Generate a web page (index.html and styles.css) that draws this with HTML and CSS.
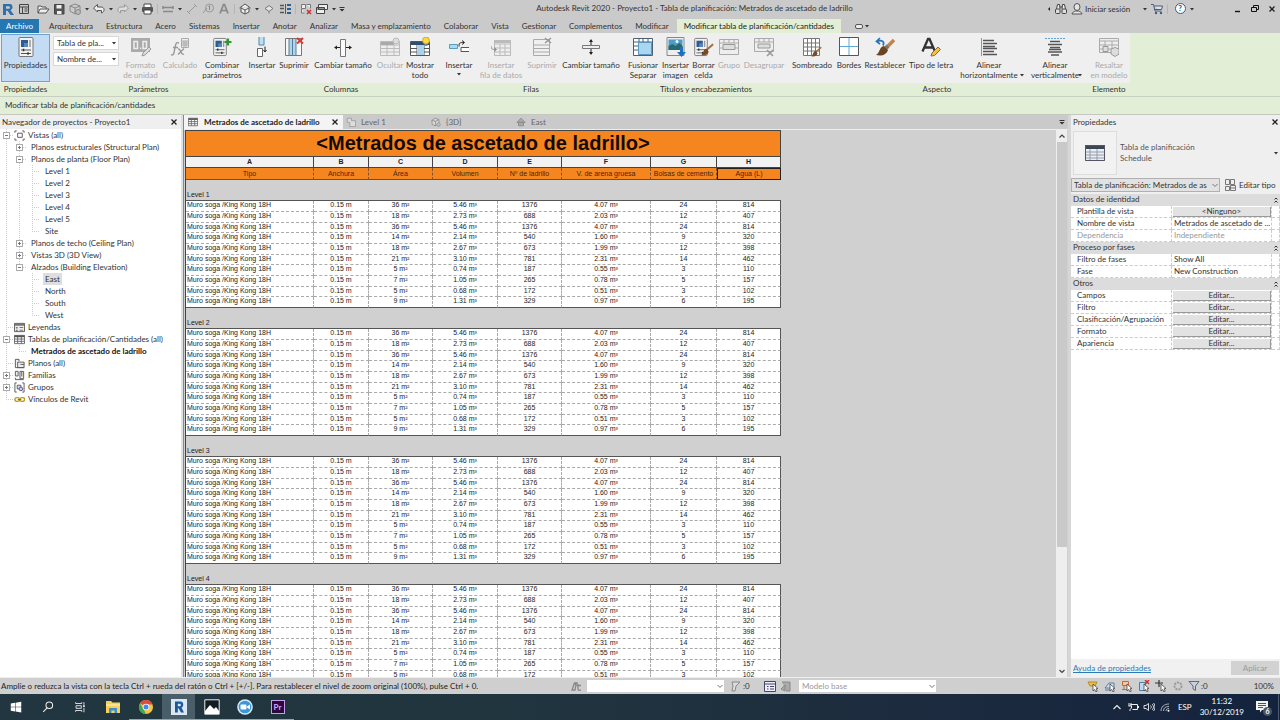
FILE: index.html
```html
<!DOCTYPE html>
<html lang="es">
<head>
<meta charset="utf-8">
<title>Autodesk Revit 2020 - Proyecto1</title>
<link rel="stylesheet" href="styles.css">
</head>
<body>
<svg class="defs" aria-hidden="true">
  <symbol id="revit" viewBox="0 0 16 16"><path d="M3 3h7c3 0 3.500 5 .5 6.200L14 14h-3.500L7.500 9.800H6V14H3zM6 5.200v2.600h3c1.300 0 1.300-2.600 0-2.600z" fill="#2f6fae" fill-rule="evenodd"/></symbol>
  <symbol id="home" viewBox="0 0 16 16"><path d="M3.500 3.500h9v9h-9zM3.500 6h9M6.500 6v6.500M8.500 8h3M8.500 10h3" fill="none" stroke="#444"/></symbol>
  <symbol id="open" viewBox="0 0 16 16"><path d="M3 12V5h3l1 1h4v2M3 12l2-4h9l-3 4z" fill="#eee" stroke="#555"/></symbol>
  <symbol id="save" viewBox="0 0 16 16"><path d="M3.500 3.500h9.500v9.500h-9.500z" fill="#555" stroke="#444"/><path d="M5.500 4h5v3.500h-5zM6 10h4.500v3H6z" fill="#eee"/></symbol>
  <symbol id="sync" viewBox="0 0 16 16"><path d="M3 5l5-2 5 2v5l-5 3-5-3zM3 5l5 2 5-2M8 7v6" fill="#ccc" stroke="#888"/><circle cx="11" cy="11" r="2.500" fill="#bbb" stroke="#888"/></symbol>
  <symbol id="undo" viewBox="0 0 16 16"><path d="M2.500 7l4-3.500V6H10c4 0 4 5 .5 6V9.500H6.500V11z" fill="#eee" stroke="#555"/></symbol>
  <symbol id="redo" viewBox="0 0 16 16"><path d="M13.500 7l-4-3.500V6H6c-4 0-4 5-.5 6V9.500h4V11z" fill="#ddd" stroke="#999"/></symbol>
  <symbol id="print" viewBox="0 0 16 16"><path d="M5 6V3h7v3" fill="#fff" stroke="#444"/><rect x="3" y="6" width="11" height="5" rx="1" fill="#555"/><path d="M5 9h7v4H5z" fill="#fff" stroke="#444"/></symbol>
  <symbol id="measure" viewBox="0 0 16 16"><path d="M3 5v3M13 5v3M3 6.500h10M3 10.500h10" stroke="#888" stroke-width="1.500" fill="none"/></symbol>
  <symbol id="dim" viewBox="0 0 16 16"><path d="M4 12l8-8M3 10l3 3M10 3l3 3" stroke="#999" fill="none"/></symbol>
  <symbol id="tag" viewBox="0 0 16 16"><path d="M3 12l4-5" stroke="#999"/><circle cx="9.500" cy="7" r="4" fill="none" stroke="#999"/><path d="M8.500 5.500l1-1V9" stroke="#888" fill="none"/></symbol>
  <symbol id="letter" viewBox="0 0 16 16"><path d="M4 12.500L7.500 3.500h1L12 12.500M5.500 9.500h5" stroke="#888" stroke-width="1.700" fill="none"/></symbol>
  <symbol id="cube" viewBox="0 0 16 16"><path d="M2.500 7L8 3l5.500 4M4 6.500V11l4 2 4-2V6.500M4 7l4 2 4-2M8 9v4" fill="#eee" stroke="#555"/></symbol>
  <symbol id="box3d" viewBox="0 0 12 12"><path d="M1 4l4-2.500L9.500 3v4.500L5 10.500 1.500 9zM1 4l4.500 1.500L9.500 3M5.500 5.500L5 10.500" fill="#ddd" stroke="#8a8a8a"/><circle cx="9" cy="9" r="2" fill="#ccc" stroke="#8a8a8a"/></symbol>
  <symbol id="section" viewBox="0 0 16 16"><path d="M4 7.500L8 4.500l4 3-4 3z" fill="#e4e4e4" stroke="#777"/><path d="M8 10.500v2" stroke="#777"/></symbol>
  <symbol id="thin" viewBox="0 0 16 16"><path d="M3 4.500h4M3 7.500h4M3 11.500h4" stroke="#555" stroke-width="1.500"/><path d="M8.500 3v10" stroke="#555"/><path d="M10 4h4M10 8h4M10 12h4" stroke="#2e5e96" stroke-width="2"/></symbol>
  <symbol id="closewin" viewBox="0 0 16 16"><path d="M3.500 3.500h4v4h-4zM8.500 3.500h4v4M3.500 8v4h3" fill="#eee" stroke="#777"/><path d="M9 9l4 4M13 9l-4 4" stroke="#c33" stroke-width="1.600"/></symbol>
  <symbol id="switch" viewBox="0 0 16 16"><path d="M4.500 3.500h9v5h-9zM2.500 6.500h8v6h-8z" fill="#eee" stroke="#444"/><path d="M3 8h7" stroke="#444"/></symbol>
  <symbol id="caret" viewBox="0 0 8 8"><path d="M2 3h4L4 5.500z" fill="#333"/></symbol>
  <symbol id="caretbar" viewBox="0 0 8 8"><path d="M1.500 2h5v1h-5zM1.500 4h5L4 6.500z" fill="#333"/></symbol>
  <symbol id="chev" viewBox="0 0 8 8"><path d="M1.500 3L4 5.500 6.500 3" fill="none" stroke="#777"/></symbol>
  <symbol id="up" viewBox="0 0 8 8"><path d="M1.500 5.500L4 3l2.500 2.500" fill="none" stroke="#444" stroke-width="1.200"/></symbol>
  <symbol id="down" viewBox="0 0 8 8"><path d="M1.500 3L4 5.500 6.500 3" fill="none" stroke="#444" stroke-width="1.200"/></symbol>
  <symbol id="collapse" viewBox="0 0 8 8"><path d="M2.500 3.500L4 2l1.500 1.500M2.500 6.500L4 5l1.500 1.500" fill="none" stroke="#333"/></symbol>
  <symbol id="x" viewBox="0 0 8 8"><path d="M1.500 1.500l5 5M6.500 1.500l-5 5" stroke="#222" stroke-width="1.300"/></symbol>
  <symbol id="left" viewBox="0 0 8 8"><path d="M5 2v4L3 4z" fill="#222"/></symbol>
  <symbol id="bino" viewBox="0 0 16 16"><path d="M3.500 8l1-4.500h2L7 8M9 8l.5-4.500h2l1 4.500M7 6h2" fill="#eee" stroke="#444"/><rect x="2.500" y="8" width="4.500" height="4.500" rx="1" fill="#ddd" stroke="#444"/><rect x="9" y="8" width="4.500" height="4.500" rx="1" fill="#ddd" stroke="#444"/></symbol>
  <symbol id="user" viewBox="0 0 16 16"><ellipse cx="8" cy="6" rx="3" ry="3.500" fill="#e4e4e4" stroke="#555"/><path d="M3 13c0-2 3-2.500 3.500-3h3c.5.500 3.500 1 3.500 3z" fill="#e4e4e4" stroke="#555"/></symbol>
  <symbol id="cart" viewBox="0 0 16 16"><path d="M2 3.500h2.500L6 10h6.500M5 5h8.500L12.500 8.500H5.700" fill="#dde4ee" stroke="#4b5b78"/><circle cx="7" cy="12" r="1.200" fill="#4b5b78"/><circle cx="12" cy="12" r="1.200" fill="#4b5b78"/></symbol>
  <symbol id="min" viewBox="0 0 8 8"><path d="M1 6.500h5" stroke="#111" stroke-width="1.400"/></symbol>
  <symbol id="restore" viewBox="0 0 8 8"><path d="M2.500 2.500v-2h5v4h-2M.5 2.500h5v4h-5z" fill="none" stroke="#111"/></symbol>

  <symbol id="props" viewBox="0 0 20 20"><rect x="3" y=".5" width="14" height="19" rx="1" fill="#f2f2f2" stroke="#777"/><path d="M5 3h7v7H5z" fill="#2f5b93"/><path d="M8 6h4v4H8z" fill="#5a86b8"/><path d="M14 3v7" stroke="#999" stroke-width="1.500"/><path d="M5 13h10M5 16.500h10" stroke="#555"/><path d="M7.500 11.700v2.600M12 15.200v2.600" stroke="#333" stroke-width="1.500"/></symbol>
  <symbol id="combine" viewBox="0 0 20 20"><use href="#props" width="18" height="20" x="-1"/><path d="M16 1.500v7M12.500 5h7" stroke="#2a9a2e" stroke-width="2.200"/></symbol>
  <symbol id="unit" viewBox="0 0 20 20"><rect x="0" y="1" width="19" height="14" fill="#aaa"/><path d="M3 4.500h3.500v7H3zM12 4.500h3.500v7H12z" fill="none" stroke="#eee" stroke-width="1.500"/><path d="M9 10.500h1.200v1.500H9z" fill="#eee"/><path d="M11 19l1-3 6-6 2 2-6 6z" fill="#ddd" stroke="#999"/></symbol>
  <symbol id="calc" viewBox="0 0 20 20"><path d="M1 17.500c3 2 3-2 4-7S6.500 5 9 6M3 10.500h5M8 12c3-1 3 7 6 5M14 11.500L8 17.500" stroke="#999" stroke-width="1.400" fill="none"/><path d="M11.500 1.500h7v9h-7zM11.500 4h7M11.500 6h7M11.500 8h7M14 4v6M16 4v6" stroke="#aaa" fill="#eee"/></symbol>
  <symbol id="inscol" viewBox="0 0 20 20"><path d="M7 0v8h5V0" fill="#bfe0f3" stroke="#4d87a8"/><path d="M5.500 11.500h5v8h-5z" fill="#fff" stroke="#666"/><path d="M13 9.500v5M11.500 13l1.500 2 1.500-2" fill="none" stroke="#222"/></symbol>
  <symbol id="delcol" viewBox="0 0 20 20"><path d="M1.500 1.500h16v17h-16z" fill="#f8f8f8" stroke="#777"/><path d="M5 2h7v16H5z" fill="#add5ee"/><path d="M5 2v16M8.500 2v16M12 2v16" stroke="#5b7c97"/><path d="M13 1l6 5.500M19 1l-6 5.500" stroke="#d63b32" stroke-width="2"/></symbol>
  <symbol id="sizecol" viewBox="0 0 20 20"><path d="M7.500 2.500h5v17h-5z" fill="#fafafa" stroke="#777"/><path d="M2 10.500h5M13 10.500h5" stroke="#222"/><path d="M4 8.500v4l-3-2zM16 8.500v4l3-2z" fill="#222"/></symbol>
  <symbol id="hide" viewBox="0 0 20 20"><path d="M.5 4.500h19v14H.5zM.5 8h19M.5 11.500h19M.5 15h19M7 8v10.500M14 8v10.500" fill="#eee" stroke="#bbb"/><path d="M1 5h13v3H1z" fill="#aaa"/><circle cx="16" cy="4" r="3" fill="#ddd" stroke="#bbb"/></symbol>
  <symbol id="show" viewBox="0 0 20 20"><path d="M.5 4.500h19v14H.5zM.5 11.500h19M.5 15h19M7 8v10.500M14 8v10.500" fill="#fff" stroke="#555"/><path d="M1 5h18v3H1z" fill="#2f4d70"/><path d="M7 8h7v10H7z" fill="#a9d3ec"/><circle cx="16" cy="3.500" r="3.400" fill="#ffd84a" stroke="#d6a81c"/><path d="M14.500 7h3v2h-3z" fill="#888"/></symbol>
  <symbol id="insrow" viewBox="0 0 20 20"><path d="M.5 7.500h8v4h-8z" fill="#a9daf3" stroke="#5b9dbf"/><path d="M20 10.500h-8v4h8" fill="#fff" stroke="#555"/><path d="M10 9.500c0-4 1-4 5-4M13 3.500l2.500 2-2.500 2" fill="none" stroke="#222"/></symbol>
  <symbol id="datarow" viewBox="0 0 20 20"><path d="M3.500 3.500h16v15h-16zM3.500 7h16M3.500 11h16M3.500 15h16M9 7v11M14 7v11" fill="#eee" stroke="#bbb"/><path d="M3 3h17v3H3z" fill="#bbb"/><path d="M0 9c0 3 1 3.500 5 3.500M3 10.500l2.500 2-2.500 2" fill="none" stroke="#888"/></symbol>
  <symbol id="delrow" viewBox="0 0 20 20"><path d="M1.500 2.500h16v16h-16zM1.500 8h16M1.500 11.500h16M1.500 15h16" fill="#f0f0f0" stroke="#aaa"/><path d="M13 1l6 5M19 1l-6 5" stroke="#999" stroke-width="1.600"/></symbol>
  <symbol id="sizerow" viewBox="0 0 20 20"><path d="M1.500 8.500h17v3h-17z" fill="#eee" stroke="#777"/><path d="M10 3v5M10 12v5" stroke="#222"/><path d="M8 5h4L10 2zM8 15h4l-2 3z" fill="#222"/></symbol>
  <symbol id="merge" viewBox="0 0 20 20"><path d="M.5 1.500h19v17H.5zM.5 5h19M.5 9h5M.5 13h5M6 1v4M10 1v4M15 1v4" fill="#fff" stroke="#4a6178"/><path d="M5.500 5.500h13v12h-13z" fill="#a9d7f2" stroke="#5c97bd"/></symbol>
  <symbol id="image" viewBox="0 0 20 20"><path d="M1 .5h17v18H1z" fill="#eee" stroke="#888"/><path d="M2.500 2.500h14V13h-14z" fill="#4b9cc9"/><path d="M2.500 13V9l4-2 3 2 4-3 3 3v4z" fill="#28696f"/><circle cx="11" cy="4.500" r="1.500" fill="#fff"/><path d="M14 10v5h-3l4.500 5 4.500-5h-3v-5z" fill="#1f6fc0"/></symbol>
  <symbol id="brush" viewBox="0 0 20 20"><path d="M19 7l-8 7" stroke="#a06f3e" stroke-width="2.200"/><path d="M12 12c-4 0-3 4-6 7 4 1 8-1 8-4z" fill="#7a4a24"/></symbol>
  <symbol id="clear" viewBox="0 0 20 20"><use href="#props" width="18" height="20" x="-2"/><use href="#brush" x="2" y="1" width="18" height="18"/></symbol>
  <symbol id="group" viewBox="0 0 20 20"><path d="M.5 2.500h19v15H.5zM.5 6h19M5 3v3M10 3v3M15 3v3M.5 11h4M15 11h4" fill="#eee" stroke="#aaa"/><path d="M4 7.500h12v5H4z" fill="#ddd" stroke="#999"/></symbol>
  <symbol id="ungroup" viewBox="0 0 20 20"><path d="M.5 1.500h19v13H.5zM.5 5h19M5 2v3M10 2v3M15 2v3" fill="#eee" stroke="#aaa"/><path d="M4 7h12v4H4z" fill="#ddd" stroke="#999"/><path d="M13 13l6 6M19 13l-6 6" stroke="#999" stroke-width="1.600"/></symbol>
  <symbol id="shade" viewBox="0 0 20 20"><path d="M1.500 1.500h16v17h-16zM1.500 6h16M1.500 10h16M1.500 14h16M5.500 2v16M9.500 2v16M13.500 2v16" fill="#fff" stroke="#777"/><use href="#brush" x="5" y="5" width="15" height="15"/></symbol>
  <symbol id="borders" viewBox="0 0 20 20"><path d="M.5 .5h19v18H.5z" fill="#fff" stroke="#555"/><path d="M10 1v17M1 9.500h18" stroke="#63a7d6"/></symbol>
  <symbol id="reset" viewBox="0 0 20 20"><path d="M8 8.500c2-4-1-5.500-5-4.500M5 1L1.500 4.500 5 7" fill="none" stroke="#2674b8" stroke-width="1.700"/><path d="M19 3l-8 8" stroke="#c48446" stroke-width="3.500"/><path d="M13 9l-2 2" stroke="#777" stroke-width="4"/><path d="M9 9l4 4c-2 6-8 6-12 5 4-2 3-8 8-9z" fill="#6b4423"/></symbol>
  <symbol id="type" viewBox="0 0 20 20"><path d="M1.500 14.500L7 2h1.500L14 14.500M3.500 10.500h8" stroke="#333" stroke-width="2.300" fill="none"/><path d="M10 19l1-3 6-6 2.500 2.500-6 6z" fill="#f2c14a" stroke="#8a6a2a"/></symbol>
  <symbol id="alignh" viewBox="0 0 20 20"><path d="M2.500 1v18" stroke="#5ba3da"/><path d="M4 3.500h11M4 6.500h14M4 9.500h12M4 11.500h14M4 14.500h11M4 17.500h14" stroke="#555" stroke-width="1.300"/></symbol>
  <symbol id="alignv" viewBox="0 0 20 20"><path d="M0 1.500h20" stroke="#5ba3da" stroke-dasharray="2 1"/><path d="M5 4.500h10M3 7.500h14M5 10.500h10M4 12.500h12M3 15h14M6 18h8" stroke="#555" stroke-width="1.300"/></symbol>
  <symbol id="highlight" viewBox="0 0 20 20"><path d="M.5 1.500h19v14H.5zM.5 4h19M.5 8h19M.5 12h19M6 4v11M13 4v11" fill="#eee" stroke="#aaa"/><path d="M4 9.500h5v5H4zM12 12l4-1.500 4 1.500v5l-4 2.500-4-2.500z" fill="#ddd" stroke="#999"/></symbol>

  <symbol id="views" viewBox="0 0 12 12"><path d="M1 3V1h2M9 1h2v2M11 9v2H9M3 11H1V9" fill="none" stroke="#555"/><path d="M4 3.500h5V8H4z" fill="#fff" stroke="#555"/></symbol>
  <symbol id="legend" viewBox="0 0 12 12"><path d="M.5 1.500h11v9H.5z" fill="#eee" stroke="#555"/><path d="M1 2h10v2H1zM2 5.500h2v1.500H2zM2 8.500h2V10H2zM6 5.500h4v1H6zM6 8.500h4v1H6z" fill="#777"/></symbol>
  <symbol id="sched" viewBox="0 0 12 12"><path d="M.5 1.500h11v9H.5zM.5 5.500h11M.5 8h11M4 3v7.500M8 3v7.500" fill="#fff" stroke="#666"/><path d="M.5 1.500h11v2H.5z" fill="#555"/></symbol>
  <symbol id="sheets" viewBox="0 0 12 12"><path d="M1.500 10.500v-9h4v2M4 10.500v-6h7v6zM1.500 10.500H11M7 7h4" fill="#eee" stroke="#555"/></symbol>
  <symbol id="family" viewBox="0 0 12 12"><path d="M1.500 1.500h3v5h-3zM6.500 1.500h4v8h-4zM1.500 8.500v2h9M8.500 2v5" fill="#eee" stroke="#555"/></symbol>
  <symbol id="groups" viewBox="0 0 12 12"><path d="M3 1H1v10h2M9 1h2v10H9" fill="none" stroke="#555"/><path d="M3.500 3.500h4v4h-4z" fill="#ddd" stroke="#557"/><circle cx="7.500" cy="7.500" r="2" fill="#ccd" stroke="#557"/></symbol>
  <symbol id="link" viewBox="0 0 12 12"><rect x="1" y="4" width="5" height="4" rx="2" fill="none" stroke="#c19a1b" stroke-width="1.500"/><rect x="6.500" y="4" width="5" height="4" rx="2" fill="none" stroke="#c19a1b" stroke-width="1.500"/><path d="M4 6h4" stroke="#8a6d10"/></symbol>
  <symbol id="plan" viewBox="0 0 12 12"><path d="M1.500 1.500h5v3h5v7h-7v-5h-3z" fill="#ddd" stroke="#999"/></symbol>
  <symbol id="elev" viewBox="0 0 12 12"><path d="M1 6.500L6 1.500l5 5zM3 6.500h6v4H3z" fill="#aaa" stroke="#888"/></symbol>
  <symbol id="edittype" viewBox="0 0 12 12"><path d="M1.500 .5h4v5h-4zM6.500 .5h4v5h-4zM1.500 7.500h4v4h-4zM6.500 6.500h5v5h-5zM7 9h4" fill="#eee" stroke="#777"/></symbol>
  <symbol id="bigsched" viewBox="0 0 20 16"><path d="M.5 .5h19v15H.5zM.5 7h19M.5 10h19M.5 13h19M5 4v12M12 4v12" fill="#e6f0f6" stroke="#99a"/><path d="M0 0h20v4H0z" fill="#3c4657"/><path d="M.5 .5h19v15H.5z" fill="none" stroke="#556"/></symbol>

  <symbol id="set" viewBox="0 0 12 12"><path d="M1 10l2-6h2l-1 6zM7 4v5c0 2 3 1 3 1M5.500 5.500H10M3 3h4" fill="none" stroke="#888" stroke-width="1.300"/></symbol>
  <symbol id="sel" viewBox="0 0 12 12"><path d="M3 2h8l-4 4-1 5H3l1-5z" fill="#ddd" stroke="#888"/></symbol>
  <symbol id="opts" viewBox="0 0 12 12"><path d="M.5 1.500h11v10H.5zM.5 4h11" fill="#eef" stroke="#446"/><path d="M3 6.500h1.500M6 6.500h4M3 9h1.500M6 9h4" stroke="#446"/></symbol>
  <symbol id="opt2" viewBox="0 0 12 12"><path d="M2 2h8v9H6M1 9l4-4v6z" fill="#aaa" stroke="#888"/></symbol>
  <symbol id="arrow" viewBox="0 0 12 12"><path d="M6 4v7l1.700-1.500L9 12l1.200-.8L9 8.800l2-.3z" fill="#fff" stroke="#444" stroke-width=".8"/></symbol>
  <symbol id="s1" viewBox="0 0 12 12"><path d="M1 2h9l-2 4H3z" fill="#f0c040" stroke="#b58a20"/><use href="#arrow"/></symbol>
  <symbol id="s2" viewBox="0 0 12 12"><path d="M1 8l4-5h5v5zM1 10h5" fill="#cfe3f2" stroke="#4c7fa8"/><use href="#arrow"/></symbol>
  <symbol id="s3" viewBox="0 0 12 12"><path d="M1.500 1.500h6v4h-6zM3 5.500v4M1 9.500h5" fill="#f4c7a4" stroke="#c56a35"/><use href="#arrow"/></symbol>
  <symbol id="s4" viewBox="0 0 12 12"><path d="M1.500 2.500h6v8h-6z" fill="#bcd9ef" stroke="#4c7fa8"/><path d="M7 0l4 4M11 0L7 4" stroke="#c33" stroke-width="1.500"/><use href="#arrow"/></symbol>
  <symbol id="s5" viewBox="0 0 12 12"><path d="M0 3h8M4 0v7" stroke="#333" stroke-width="1.200"/><use href="#arrow"/></symbol>
  <symbol id="s6" viewBox="0 0 12 12"><circle cx="6" cy="6" r="3.500" fill="none" stroke="#999" stroke-width="2" stroke-dasharray="2 1"/></symbol>
  <symbol id="funnel" viewBox="0 0 12 12"><path d="M1 1.500h10L7.500 6v4.500L5 9V6z" fill="#c6d3de" stroke="#667"/></symbol>

  <symbol id="win" viewBox="0 0 16 16"><path d="M2 4l5-.8v4.600H2zM7.600 3.100L14 2v5.800H7.600zM2 8.400h5V13l-5-.8zM7.600 8.400H14v5.800l-6.400-1z" fill="#fff"/></symbol>
  <symbol id="search" viewBox="0 0 16 16"><circle cx="9.500" cy="6" r="3.800" fill="none" stroke="#eee" stroke-width="1.200"/><path d="M7 9l-4.500 4.500" stroke="#eee" stroke-width="1.200"/></symbol>
  <symbol id="task" viewBox="0 0 16 16"><path d="M3 2.500V4h7V2.500M3.500 6.500h6v3h-6zM3 13.500V12h7v1.500M12.500 2.500v3M12.500 9v5" fill="none" stroke="#eee"/><path d="M11.500 6h2v2h-2z" fill="#eee"/></symbol>
  <symbol id="folder" viewBox="0 0 16 16"><path d="M1 2h5l1.500 1.500H15V14H1z" fill="#f6cf5a"/><path d="M1 5h14v2H1z" fill="#fbe190"/><path d="M4 9h8v5h-2.500v-2.500h-3V14H4z" fill="#3f8fce"/></symbol>
  <symbol id="chrome" viewBox="0 0 16 16"><circle cx="8" cy="8" r="7" fill="#f5c63a"/><path d="M8 8L2 4.300a7 7 0 0 1 12.500 1.200H8z" fill="#dd4b3e"/><path d="M2 4.300L5.500 10 8 15A7 7 0 0 1 2 4.300z" fill="#3fa557"/><circle cx="8" cy="8" r="3.300" fill="#fff"/><circle cx="8" cy="8" r="2.500" fill="#4285f4"/></symbol>
  <symbol id="revitapp" viewBox="0 0 16 16"><path d="M0 0h16v16H0z" fill="#d9e6f3"/><path d="M4 2.500h5.500c3.500 0 3.500 5.200 1 6.200L13 13.500h-3L7.500 9.200H6.800v4.300H4zM6.800 4.800v2.400H9c1.200 0 1.200-2.400 0-2.400z" fill="#1e5799" fill-rule="evenodd"/></symbol>
  <symbol id="photos" viewBox="0 0 16 16"><path d="M.8 .8h14.400v14.400H.8z" fill="#111c22" stroke="#eee" stroke-width="1"/><path d="M1 15v-3l5-6 4 4 2-2 3 4v3z" fill="#fff"/></symbol>
  <symbol id="zoomapp" viewBox="0 0 16 16"><circle cx="8" cy="8" r="7.800" fill="#d7ecf8"/><circle cx="8" cy="8" r="6.300" fill="#3b97d8"/><rect x="3.500" y="5.500" width="6" height="5" rx="1" fill="#fff"/><path d="M10 7.500l3-2v5l-3-2z" fill="#fff"/></symbol>
  <symbol id="batt" viewBox="0 0 12 12"><path d="M3.500 3.500h7v5h-5M2 2v3M4 2v3M1.500 5h3v2l-1.500 1.500V10M11.500 5v2" fill="none" stroke="#eee"/></symbol>
  <symbol id="sound" viewBox="0 0 12 12"><path d="M1 4.500h2l2.500-2v7L3 7.500H1zM7.500 4.500c1 1 1 2 0 3M9 3c2 2 2 4 0 6M10.500 2c2 2.500 2 5.500 0 8" fill="none" stroke="#eee" stroke-width=".9"/></symbol>
  <symbol id="wifi" viewBox="0 0 12 12"><path d="M2 10c0-4 3-7 8-7M4.500 10c0-3 2-4.500 5.500-4.500M7 10c0-1.500 1-2.500 3-2.500" fill="none" stroke="#aab4bd"/><circle cx="9.500" cy="9.800" r="1" fill="#fff"/></symbol>
  <symbol id="trayup" viewBox="0 0 12 12"><path d="M2.500 8L6 4.500 9.500 8" fill="none" stroke="#eee" stroke-width="1.100"/></symbol>
  <symbol id="note" viewBox="0 0 16 16"><path d="M1 2h12v9H7l-2 2.500V11H1z" fill="#f2f2f2"/><path d="M3 4.500h8M3 6.500h8M3 8.500h5" stroke="#1a2940" stroke-width=".8"/></symbol>
</svg>

<header class="titlebar">
  <div class="qat">
    <button><svg><use href="#revit"/></svg></button>
    <button><svg><use href="#home"/></svg></button>
    <i class="gap"></i>
    <button><svg><use href="#open"/></svg></button>
    <button><svg><use href="#save"/></svg></button>
    <button><svg><use href="#sync"/></svg></button>
    <button class="c"><svg><use href="#caret"/></svg></button>
    <button><svg><use href="#undo"/></svg></button>
    <button class="c"><svg><use href="#caret"/></svg></button>
    <button><svg><use href="#redo"/></svg></button>
    <button class="c"><svg><use href="#caret"/></svg></button>
    <button><svg><use href="#print"/></svg></button>
    <i class="sep"></i>
    <button><svg><use href="#measure"/></svg></button>
    <button class="c"><svg><use href="#caret"/></svg></button>
    <button><svg><use href="#dim"/></svg></button>
    <button><svg><use href="#tag"/></svg></button>
    <button><svg><use href="#letter"/></svg></button>
    <i class="sep"></i>
    <button><svg><use href="#cube"/></svg></button>
    <button class="c"><svg><use href="#caret"/></svg></button>
    <button><svg><use href="#section"/></svg></button>
    <button><svg><use href="#thin"/></svg></button>
    <i class="sep"></i>
    <button><svg><use href="#closewin"/></svg></button>
    <button><svg><use href="#switch"/></svg></button>
    <button class="c"><svg><use href="#caret"/></svg></button>
    <button class="c"><svg><use href="#caretbar"/></svg></button>
  </div>
  <h1 class="app-title">Autodesk Revit 2020 - Proyecto1 - Tabla de planificación: Metrados de ascetado de ladrillo</h1>
  <div class="account">
    <button class="c"><svg><use href="#left"/></svg></button>
    <button><svg><use href="#bino"/></svg></button>
    <button class="signin"><svg><use href="#user"/></svg>Iniciar sesión</button>
    <button class="c"><svg><use href="#caret"/></svg></button>
    <button><svg><use href="#cart"/></svg></button>
    <i class="sep"></i>
    <button class="help"><span>?</span></button>
    <button class="c"><svg><use href="#caret"/></svg></button>
  </div>
  <div class="winbtns">
    <button class="c"><svg><use href="#min"/></svg></button>
    <button class="c"><svg><use href="#restore"/></svg></button>
    <button class="c"><svg><use href="#x"/></svg></button>
  </div>
</header>

<nav class="tabs">
  <button class="file">Archivo</button>
  <button>Arquitectura</button><button>Estructura</button><button>Acero</button><button>Sistemas</button><button>Insertar</button><button>Anotar</button><button>Analizar</button><button>Masa y emplazamiento</button><button>Colaborar</button><button>Vista</button><button>Gestionar</button><button>Complementos</button><button>Modificar</button>
  <button class="active">Modificar tabla de planificación/cantidades</button>
  <button class="view"><i></i><svg><use href="#caret"/></svg></button>
</nav>

<section class="ribbon">
  <div class="panel p1"><div class="tools"><button class="tool on"><svg><use href="#props"/></svg>Propiedades</button></div><h2>Propiedades</h2></div>
  <div class="panel p2"><div class="tools">
    <div class="combos">
      <label class="pick"><select aria-label="Tipo de parámetro"><option>Tabla de pla...</option></select><svg><use href="#caret"/></svg></label>
      <label class="pick"><select aria-label="Parámetro"><option>Nombre de...</option></select><svg><use href="#caret"/></svg></label>
    </div>
    <button class="tool" disabled><svg><use href="#unit"/></svg>Formato<br>de unidad</button>
    <button class="tool" disabled><svg><use href="#calc"/></svg>Calculado</button>
    <button class="tool"><svg><use href="#combine"/></svg>Combinar<br>parámetros</button>
  </div><h2>Parámetros</h2></div>
  <div class="panel p3"><div class="tools">
    <button class="tool"><svg><use href="#inscol"/></svg>Insertar</button>
    <button class="tool"><svg><use href="#delcol"/></svg>Suprimir</button>
    <button class="tool"><svg><use href="#sizecol"/></svg>Cambiar tamaño</button>
    <button class="tool" disabled><svg><use href="#hide"/></svg>Ocultar</button>
    <button class="tool"><svg><use href="#show"/></svg>Mostrar<br>todo</button>
  </div><h2>Columnas</h2></div>
  <div class="panel p4"><div class="tools">
    <button class="tool"><svg><use href="#insrow"/></svg>Insertar<svg class="mini"><use href="#caret"/></svg></button>
    <button class="tool" disabled><svg><use href="#datarow"/></svg>Insertar<br>fila de datos</button>
    <button class="tool" disabled><svg><use href="#delrow"/></svg>Suprimir</button>
    <button class="tool"><svg><use href="#sizerow"/></svg>Cambiar tamaño</button>
  </div><h2>Filas</h2></div>
  <div class="panel p5"><div class="tools">
    <button class="tool"><svg><use href="#merge"/></svg>Fusionar<br>Separar</button>
    <button class="tool"><svg><use href="#image"/></svg>Insertar<br>imagen</button>
    <button class="tool"><svg><use href="#clear"/></svg>Borrar<br>celda</button>
    <button class="tool" disabled><svg><use href="#group"/></svg>Grupo</button>
    <button class="tool" disabled><svg><use href="#ungroup"/></svg>Desagrupar</button>
  </div><h2>Títulos y encabezamientos</h2></div>
  <div class="panel p6"><div class="tools">
    <button class="tool"><svg><use href="#shade"/></svg>Sombreado</button>
    <button class="tool"><svg><use href="#borders"/></svg>Bordes</button>
    <button class="tool"><svg><use href="#reset"/></svg>Restablecer</button>
    <button class="tool"><svg><use href="#type"/></svg>Tipo de letra</button>
    <button class="tool split"><svg><use href="#alignh"/></svg>Alinear<br>horizontalmente</button>
    <button class="drop" aria-label="Opciones"><svg class="mini"><use href="#caret"/></svg></button>
    <button class="tool split"><svg><use href="#alignv"/></svg>Alinear<br>verticalmente</button>
    <button class="drop" aria-label="Opciones"><svg class="mini"><use href="#caret"/></svg></button>
  </div><h2>Aspecto</h2></div>
  <div class="panel p7"><div class="tools"><button class="tool" disabled><svg><use href="#highlight"/></svg>Resaltar<br>en modelo</button></div><h2>Elemento</h2></div>
</section>
<div class="optionbar">Modificar tabla de planificación/cantidades</div>

<main class="work">
  <aside class="browser">
    <div class="pane-title"><h2>Navegador de proyectos - Proyecto1</h2><button class="c"><svg><use href="#x"/></svg></button></div>
    <ul class="tree" id="tree"></ul>
  </aside>

  <section class="doc">
    <div class="doctabs">
      <button class="active"><svg><use href="#sched"/></svg>Metrados de ascetado de ladrillo<svg class="x"><use href="#x"/></svg></button>
      <button class="t1"><svg><use href="#plan"/></svg>Level 1</button>
      <button class="t2"><svg><use href="#box3d"/></svg>{3D}</button>
      <button class="t3"><svg><use href="#elev"/></svg>East</button>
      <button class="more"><svg><use href="#caretbar"/></svg></button>
    </div>
    <div class="docbody">
      <div class="sheet">
        <table class="schedule">
          <colgroup><col class="w128"><col class="w55"><col class="w64"><col class="w65"><col class="w64"><col class="w89"><col class="w66"><col class="w64"></colgroup>
          <thead>
            <tr class="name"><th colspan="8">&lt;Metrados de ascetado de ladrillo&gt;</th></tr>
            <tr class="letters"><th>A</th><th>B</th><th>C</th><th>D</th><th>E</th><th>F</th><th>G</th><th>H</th></tr>
            <tr class="fields"><th>Tipo</th><th>Anchura</th><th>Área</th><th>Volumen</th><th>Nº de ladrillo</th><th>V. de arena gruesa</th><th>Bolsas de cemento</th><th class="picked">Agua (L)</th></tr>
          </thead>
        </table>
      </div>
      <div class="vscroll"><svg><use href="#up"/></svg><i class="thumb"></i><i class="track"></i><svg><use href="#down"/></svg></div>
    </div>
  </section>

  <aside class="props">
    <div class="pane-title"><h2>Propiedades</h2><button class="c"><svg><use href="#x"/></svg></button></div>
    <button class="family"><span class="thumbnail"><svg><use href="#bigsched"/></svg></span><span class="fname">Tabla de planificación<br>Schedule</span><svg class="mini"><use href="#caret"/></svg></button>
    <div class="instance">
      <label class="pick"><select aria-label="Ejemplar"><option>Tabla de planificación: Metrados de as</option></select><svg><use href="#chev"/></svg></label>
      <button class="edittype"><svg><use href="#edittype"/></svg>Editar tipo</button>
    </div>
    <table class="grid">
      <colgroup><col class="g1"><col class="g2"><col></colgroup>
      <tbody>
        <tr class="cat"><th colspan="2">Datos de identidad</th><td><svg><use href="#collapse"/></svg></td></tr>
        <tr><th>Plantilla de vista</th><td><button>&lt;Ninguno&gt;</button></td><td></td></tr>
        <tr><th>Nombre de vista</th><td>Metrados de ascetado de ...</td><td></td></tr>
        <tr class="off"><th>Dependencia</th><td>Independiente</td><td></td></tr>
        <tr class="cat"><th colspan="2">Proceso por fases</th><td><svg><use href="#collapse"/></svg></td></tr>
        <tr><th>Filtro de fases</th><td>Show All</td><td></td></tr>
        <tr><th>Fase</th><td>New Construction</td><td></td></tr>
        <tr class="cat"><th colspan="2">Otros</th><td><svg><use href="#collapse"/></svg></td></tr>
        <tr><th>Campos</th><td><button>Editar...</button></td><td></td></tr>
        <tr><th>Filtro</th><td><button>Editar...</button></td><td></td></tr>
        <tr><th>Clasificación/Agrupación</th><td><button>Editar...</button></td><td></td></tr>
        <tr><th>Formato</th><td><button>Editar...</button></td><td></td></tr>
        <tr><th>Apariencia</th><td><button>Editar...</button></td><td></td></tr>
      </tbody>
    </table>
    <div class="props-foot"><a href="#ayuda">Ayuda de propiedades</a><button disabled>Aplicar</button></div>
  </aside>
</main>

<footer class="status">
  <span class="hint">Amplíe o reduzca la vista con la tecla Ctrl + rueda del ratón o Ctrl + [+/-]. Para restablecer el nivel de zoom original (100%), pulse Ctrl + 0.</span>
  <svg><use href="#set"/></svg>
  <label class="pick"><select aria-label="Subproyecto"><option></option></select><svg><use href="#chev"/></svg></label>
  <span class="count"><svg><use href="#sel"/></svg>:0</span>
  <svg><use href="#opts"/></svg>
  <svg><use href="#opt2"/></svg>
  <label class="pick"><select aria-label="Opción de diseño"><option>Modelo base</option></select><svg><use href="#chev"/></svg></label>
  <span class="modes"><svg><use href="#s1"/></svg><svg><use href="#s2"/></svg><svg><use href="#s3"/></svg><svg><use href="#s4"/></svg><svg><use href="#s5"/></svg><svg><use href="#s6"/></svg></span>
  <span class="count"><svg><use href="#funnel"/></svg>:0</span>
  <span class="zoom">100%</span>
</footer>

<footer class="taskbar">
  <button class="sys"><svg><use href="#win"/></svg></button>
  <button class="sys"><svg><use href="#search"/></svg></button>
  <button class="sys"><svg><use href="#task"/></svg></button>
  <button><svg><use href="#folder"/></svg></button>
  <button class="run"><svg><use href="#chrome"/></svg></button>
  <button class="run front"><svg><use href="#revitapp"/></svg></button>
  <button class="run"><svg><use href="#photos"/></svg></button>
  <button class="run"><svg><use href="#zoomapp"/></svg></button>
  <button class="run"><span class="pr">Pr</span></button>
  <div class="tray">
    <svg><use href="#trayup"/></svg><svg><use href="#batt"/></svg><svg><use href="#sound"/></svg><svg><use href="#wifi"/></svg>
    <span class="lang">ESP</span>
    <time class="clock">11:32<br>30/12/2019</time>
    <button class="notes"><svg><use href="#note"/></svg><b>6</b></button>
  </div>
</footer>
<script src="app.js"></script>
</body>
</html>
```
FILE: styles.css
```css
* { box-sizing: border-box; }
html, body { height: 100%; }
body {
  margin: 0;
  display: flex;
  flex-direction: column;
  overflow: hidden;
  background: #cacaca;
  color: #333;
  font: 8px/12px Lato, "Open Sans", sans-serif;
}
button, select, input { font: inherit; color: inherit; margin: 0; padding: 0; border: 0; background: none; border-radius: 0; }
h1, h2 { margin: 0; font: inherit; }
svg { display: block; flex: none; width: 12px; height: 12px; }
.defs { position: absolute; width: 0; height: 0; }
.mini { width: 8px; height: 8px; }

/* Title bar */
.titlebar { display: flex; align-items: center; height: 17px; flex: none; }
.titlebar button { display: flex; align-items: center; justify-content: center; width: 16px; height: 16px; }
.titlebar button svg { width: 16px; height: 16px; }
.c, .titlebar button.c { width: 8px; }
.c svg, .titlebar button.c svg { width: 8px; height: 8px; }
.qat, .account { display: flex; align-items: center; }
.gap { width: 3px; }
.sep { width: 1px; height: 10px; margin: 0 2px; background: #b5b5b5; }
.app-title { flex: 1; text-align: center; white-space: nowrap; line-height: 14px; height: 16px; }
.account { width: 167px; padding-left: 2px; }
.titlebar .signin { width: auto; margin-right: 11px; white-space: nowrap; }
.account .help { margin-left: 2px; }
.help span { width: 11px; height: 11px; border: 1px solid #3b5c86; border-radius: 50%; background: #fff; color: #1f4f8c; font-weight: 700; line-height: 9px; }
.winbtns { display: flex; gap: 9px; padding: 0 4px 0 24px; }

/* Ribbon tabs */
.tabs { display: flex; align-items: flex-end; height: 16px; flex: none; }
.tabs button { height: 14px; padding: 0 7px 0 6px; line-height: 13px; white-space: nowrap; }
.tabs .file { width: 39px; margin-right: 4px; padding: 0; background: #2577b2; color: #fff; }
.tabs .active { margin-left: 1px; padding: 0 7px; background: #e3eed6; color: #222; }
.tabs .view { display: flex; align-items: center; margin-left: 8px; }
.tabs .view svg { width: 8px; height: 8px; }
.tabs .view i { width: 8px; height: 5px; border: 1px solid #555; border-radius: 2px; background: #eee; }

/* Ribbon */
.ribbon { display: flex; flex: none; background: #e3eed6; border-bottom: 1px solid #c9cfc2; }
.panel { flex: none; }
.tools { display: grid; height: 50px; background: #efefef; justify-content: start; }
.panel h2 { height: 13px; text-align: center; line-height: 13px; white-space: nowrap; }
.tool { display: flex; flex-direction: column; align-items: center; height: 50px; padding-top: 4px; line-height: 10px; white-space: nowrap; text-align: center; }
.tool svg { width: 20px; height: 20px; margin-bottom: 3px; }
.tool svg.mini { width: 8px; height: 8px; margin: 0; }
.tool:disabled { color: #aaa; }
.tool.on { height: 48px; margin: 1px; padding-top: 2px; border: 1px solid #6ea3cf; background: #c3dcf3; }
.tool.split { padding-left: 8px; }
.drop { align-self: end; justify-self: start; height: 16px; }
.p1 { width: 51px; }
.p2 { width: 195px; }
.p2 .tools { grid-template-columns: 69px 41px 38px 46px; }
.p3 { width: 190px; }
.p3 .tools { grid-template-columns: 32px 32px 66px 28px 32px; }
.p4 { width: 190px; }
.p4 .tools { grid-template-columns: 46px 38px 44px 54px; }
.p5 { width: 160px; }
.p5 .tools { grid-template-columns: 34px 31px 25px 26px 44px; }
.p6 { width: 302px; }
.p6 .tools { grid-template-columns: 52px 22px 50px 42px 66px 8px 50px 12px; }
.p7 { width: 42px; }
.p1 .tools, .p7 .tools { grid-template-columns: 1fr; justify-content: stretch; }
.combos { display: grid; align-content: start; gap: 2px; padding: 3px 0 0 2px; width: 68px; }
.pick { display: grid; align-items: center; background: #fff; }
.pick > * { grid-area: 1 / 1; }
.pick select { appearance: none; width: 100%; height: 100%; padding-left: 3px; }
.pick svg { justify-self: end; width: 8px; height: 8px; pointer-events: none; }
.combos .pick { height: 14px; border: 1px solid #d8d8d8; }
.optionbar { flex: none; height: 18px; padding-left: 5px; line-height: 17px; background: #e3eed6; border-bottom: 1px solid #c4c8be; }

/* Work area */
.work { flex: 1; min-height: 0; display: flex; }
.pane-title { display: flex; align-items: center; justify-content: space-between; height: 14px; flex: none; padding: 0 3px 0 2px; background: #efefef; }
.pane-title .c svg { margin: auto; }

/* Project browser */
.browser { width: 183px; flex: none; background: #fff; border-right: 2px solid #e0e0e0; }
.tree { margin: 0; padding: 0; list-style: none; }
.tree li { display: flex; align-items: center; height: 12px; white-space: nowrap; }
.tree svg { width: 11px; height: 11px; margin: 0 1px; }
.guide { flex: none; display: grid; place-items: center; width: 13px; height: 12px; background-repeat: no-repeat; }
.guide.deep { width: 14px; }
.guide.v { background-image: repeating-linear-gradient(#ccc 0 1px, transparent 1px 2px); background-size: 1px 100%; background-position: 6px 0; }
.guide.v.h { background-image: repeating-linear-gradient(#ccc 0 1px, transparent 1px 2px), repeating-linear-gradient(90deg, #ccc 0 1px, transparent 1px 2px); background-size: 1px 100%, 7px 1px; background-position: 6px 0, 6px 6px; }
.guide.v.h.last { background-size: 1px 6px, 7px 1px; }
.toggle { width: 7px; height: 7px; border: 1px solid #aaa; background: linear-gradient(#777, #777) center / 3px 1px no-repeat #fff; }
.toggle.plus { background: linear-gradient(#777, #777) center / 3px 1px no-repeat, linear-gradient(#777, #777) center / 1px 3px no-repeat, #fff; }
.label { padding: 0 2px; }
.label.far { padding-left: 5px; }
.label.bold { font-weight: 700; color: #111; }
.label.sel { margin-left: 3px; padding-left: 2px; background: #dedede; }

/* Document */
.doc { flex: 1; min-width: 0; display: flex; flex-direction: column; border-left: 1px solid #888; }
.doctabs { display: flex; height: 15px; flex: none; background: #cacaca; border-bottom: 1px solid #eee; color: #666; }
.doctabs button { display: flex; align-items: center; gap: 5px; }
.doctabs svg { width: 10px; height: 10px; }
.doctabs .active { width: 159px; gap: 6px; padding: 0 4px; background: #f4f4f4; color: #222; font-weight: 700; white-space: nowrap; }
.doctabs svg.x, .doctabs .more svg { width: 8px; height: 8px; }
.doctabs svg.x { margin-left: auto; }
.doctabs .t1 { width: 85px; padding-left: 3px; }
.doctabs .t2 { width: 85px; padding-left: 3px; }
.doctabs .t3 { padding-left: 3px; }
.doctabs .more { margin-left: auto; padding-right: 2px; }
.docbody { flex: 1; min-height: 0; display: flex; background: #d0d0d0; }
.sheet { flex: 1; min-width: 0; overflow: hidden; padding-left: 1px; }
.schedule { table-layout: fixed; width: 596px; border-collapse: separate; border-spacing: 0; font: 7px/10px "Liberation Sans", Arial, sans-serif; color: #222; border: solid #444; border-width: 1px 0 0 1px; }
.schedule th, .schedule td { padding: 0; height: 11px; overflow: hidden; white-space: nowrap; text-align: center; }
.w128 { width: 128px; } .w55 { width: 55px; } .w64 { width: 64px; } .w65 { width: 65px; } .w89 { width: 89px; } .w66 { width: 66px; }
.schedule .name th { height: 26px; background: #f5861f; color: #150a00; font-size: 20px; line-height: 25px; border-right: 1px solid #444; border-bottom: 1px solid #444; }
.schedule .letters th { background: #f2f2f2; border-right: 1px solid #444; border-bottom: 1px solid #444; }
.schedule .fields th { font-weight: 400; background: #f5861f; color: #4a2508; border-right: 1px dashed #8a5526; border-bottom: 1px solid #555; }
.schedule .fields .picked { border: 1px solid #222; }
.schedule .level th { height: 21px; font-weight: 400; text-align: left; vertical-align: bottom; padding-left: 1px; border-bottom: 1px solid #555; }
.schedule .row td { background: #fff; border-right: 1px dashed #aaa; border-bottom: 1px dashed #aaa; line-height: 8px; vertical-align: top; }
.schedule .row td:first-child { text-align: left; padding-left: 1px; }
.schedule .row td:last-child { border-right: 1px solid #555; }
.schedule .row:nth-child(3n+1) td { height: 10px; }
.schedule .row:nth-child(11) td { border-bottom: 1px solid #555; }
.vscroll { display: flex; flex-direction: column; align-items: center; width: 11px; margin-right: 1px; background: #eee; }
.vscroll svg { width: 8px; height: 12px; }
.vscroll .thumb { flex: 41; width: 10px; background: #c9c9c9; }
.vscroll .track { flex: 12; }

/* Properties */
.props { width: 212px; flex: none; display: flex; flex-direction: column; background: #fff; border-left: 3px solid #d6d6d6; }
.props .pane-title { padding-right: 1px; }
.family { display: flex; align-items: center; gap: 3px; height: 47px; background: #efefef; text-align: left; line-height: 11px; color: #555; }
.thumbnail { display: grid; place-items: center; width: 44px; height: 44px; margin-left: 2px; border: 1px solid #ddd; background: #f2f2f2; }
.thumbnail svg { width: 20px; height: 16px; }
.family .mini { margin-left: auto; }
.instance { display: flex; gap: 4px; height: 18px; background: #efefef; }
.instance .pick { width: 149px; flex: none; margin: 2px 0; background: #e2e2e2; border: 1px solid #b0b0b0; }
.instance .pick select { padding-left: 2px; }
.edittype { display: flex; align-items: center; gap: 3px; white-space: nowrap; }
.grid { table-layout: fixed; width: 100%; border-collapse: separate; border-spacing: 0; }
.g1 { width: 101px; } .g2 { width: 100px; }
.grid th, .grid td { height: 12px; padding: 0 0 0 2px; line-height: 11px; font-weight: 400; text-align: left; white-space: nowrap; overflow: hidden; border-right: 1px dashed #ccc; border-bottom: 1px dashed #ccc; }
.grid th { padding-left: 6px; }
.grid .cat th, .grid .cat td { padding: 0 0 0 2px; background: #dcdcdc; border: 0; border-bottom: 1px solid #dcdcdc; }
.grid svg { width: 8px; height: 8px; margin-left: -2px; }
.grid button { display: block; width: 98px; height: 10px; margin-left: -1px; line-height: 9px; background: #e2e2e2; border: solid #999; border-width: 0 1px 1px 0; }
.grid .off { color: #999; }
.props-foot { display: flex; align-items: center; justify-content: space-between; margin-top: auto; padding-left: 2px; height: 18px; background: #f1f1f1; }
.props-foot a { color: #2a7ab8; }
.props-foot button { width: 48px; height: 14px; margin-right: 1px; background: #d2d2d2; color: #999; }

/* Status bar */
.status { flex: none; display: flex; align-items: center; height: 17px; border-top: 1px solid #eee; background: #cfcfcf; }
.hint { width: 571px; padding-left: 1px; white-space: nowrap; color: #222; }
.status .pick { width: 137px; height: 12px; margin-left: 3px; color: #999; }
.count { display: flex; align-items: center; gap: 2px; }
.pick + .count { width: 40px; padding-left: 5px; }
.status > svg { margin-right: 4px; }
.status > svg:first-of-type { margin-right: 1px; }
.modes { display: flex; gap: 5px; margin-left: auto; padding-right: 4px; }
.modes + .count { gap: 1px; }
.zoom { margin-left: 46px; padding-right: 6px; }

/* Task bar */
.taskbar { flex: none; display: flex; height: 26px; background: linear-gradient(90deg, #213640, #21353f 40%, #1c2b3e 72%, #14233d); color: #fff; }
.taskbar button { display: grid; place-items: center; width: 33px; height: 26px; }
.taskbar button svg { width: 16px; height: 16px; }
.taskbar button.sys { width: 32px; }
.taskbar .sys svg { width: 14px; height: 14px; }
.taskbar .run { border-bottom: 1px solid #6fb0dd; }
.taskbar .front { background: #4a5e69; }
.pr { width: 14px; height: 14px; border: 1px solid #c79be6; background: #2a0a3a; color: #d9a6ff; font-weight: 700; line-height: 12px; text-align: center; }
.tray { display: flex; align-items: center; margin-left: auto; gap: 4px; border-right: 1px solid #4b586b; margin-right: 1px; }
.lang { margin: 0 4px 0 3px; }
.clock { text-align: center; line-height: 11px; }
.taskbar .notes { position: relative; width: 30px; }
.notes b { position: absolute; right: 6px; bottom: 4px; width: 9px; height: 9px; border-radius: 50%; background: #4a5566; font-size: 7px; line-height: 9px; text-align: center; }
```
FILE: app.js
```js
const rows = [
  ["36 m²", "5.46 m³", "1376", "4.07 m³", "24", "814"],
  ["18 m²", "2.73 m³", "688", "2.03 m³", "12", "407"],
  ["36 m²", "5.46 m³", "1376", "4.07 m³", "24", "814"],
  ["14 m²", "2.14 m³", "540", "1.60 m³", "9", "320"],
  ["18 m²", "2.67 m³", "673", "1.99 m³", "12", "398"],
  ["21 m²", "3.10 m³", "781", "2.31 m³", "14", "462"],
  ["5 m²", "0.74 m³", "187", "0.55 m³", "3", "110"],
  ["7 m²", "1.05 m³", "265", "0.78 m³", "5", "157"],
  ["5 m²", "0.68 m³", "172", "0.51 m³", "3", "102"],
  ["9 m²", "1.31 m³", "329", "0.97 m³", "6", "195"]
];
const table = document.querySelector(".schedule");
// Rows shown for each level; the last level runs to the bottom of the view.
[10, 10, 10, 9].forEach((count, i) => {
  const body = table.createTBody();
  body.innerHTML =
    `<tr class="level"><th colspan="8">Level ${i + 1}</th></tr>` +
    rows.slice(0, count).map(r => `<tr class="row">${["Muro soga /King Kong 18H", "0.15 m", ...r].map(v => `<td>${v}</td>`).join("")}</tr>`).join("");
});

// depth, label, toggle sign, icon, last child of its branch, extra class
const nodes = [
  [0, "Vistas (all)", "-", "views"],
  [1, "Planos estructurales (Structural Plan)", "+"],
  [1, "Planos de planta (Floor Plan)", "-"],
  [2, "Level 1"], [2, "Level 2"], [2, "Level 3"], [2, "Level 4"], [2, "Level 5"],
  [2, "Site", "", "", true],
  [1, "Planos de techo (Ceiling Plan)", "+"],
  [1, "Vistas 3D (3D View)", "+"],
  [1, "Alzados (Building Elevation)", "-", "", true],
  [2, "East", "", "", false, "sel"], [2, "North"], [2, "South"],
  [2, "West", "", "", true],
  [0, "Leyendas", "", "legend"],
  [0, "Tablas de planificación/Cantidades (all)", "-", "sched"],
  [1, "Metrados de ascetado de ladrillo", "", "", true, "bold"],
  [0, "Planos (all)", "", "sheets"],
  [0, "Familias", "+", "family"],
  [0, "Grupos", "+", "groups"],
  [0, "Vínculos de Revit", "", "link", true]
];
let branchOpen = true;
document.getElementById("tree").innerHTML = nodes.map(([depth, text, sign, icon, last, extra]) => {
  let html = "";
  for (let d = 0; d <= depth; d++) {
    const cls = ["guide"];
    if (d === depth) cls.push("v", "h", last ? "last" : "");
    else if (d === 0 || branchOpen) cls.push("v");
    if (d === 2) cls.push("deep");
    const toggle = d === depth && sign ? `<button class="toggle ${sign === "+" ? "plus" : ""}" aria-label="${text}"></button>` : "";
    html += `<span class="${cls.join(" ")}">${toggle}</span>`;
  }
  if (depth === 0) branchOpen = true;
  if (depth === 1 && last) branchOpen = false;
  if (icon) html += `<svg><use href="#${icon}"/></svg>`;
  return `<li>${html}<span class="label ${depth ? "far" : ""} ${extra || ""}">${text}</span></li>`;
}).join("");
```
